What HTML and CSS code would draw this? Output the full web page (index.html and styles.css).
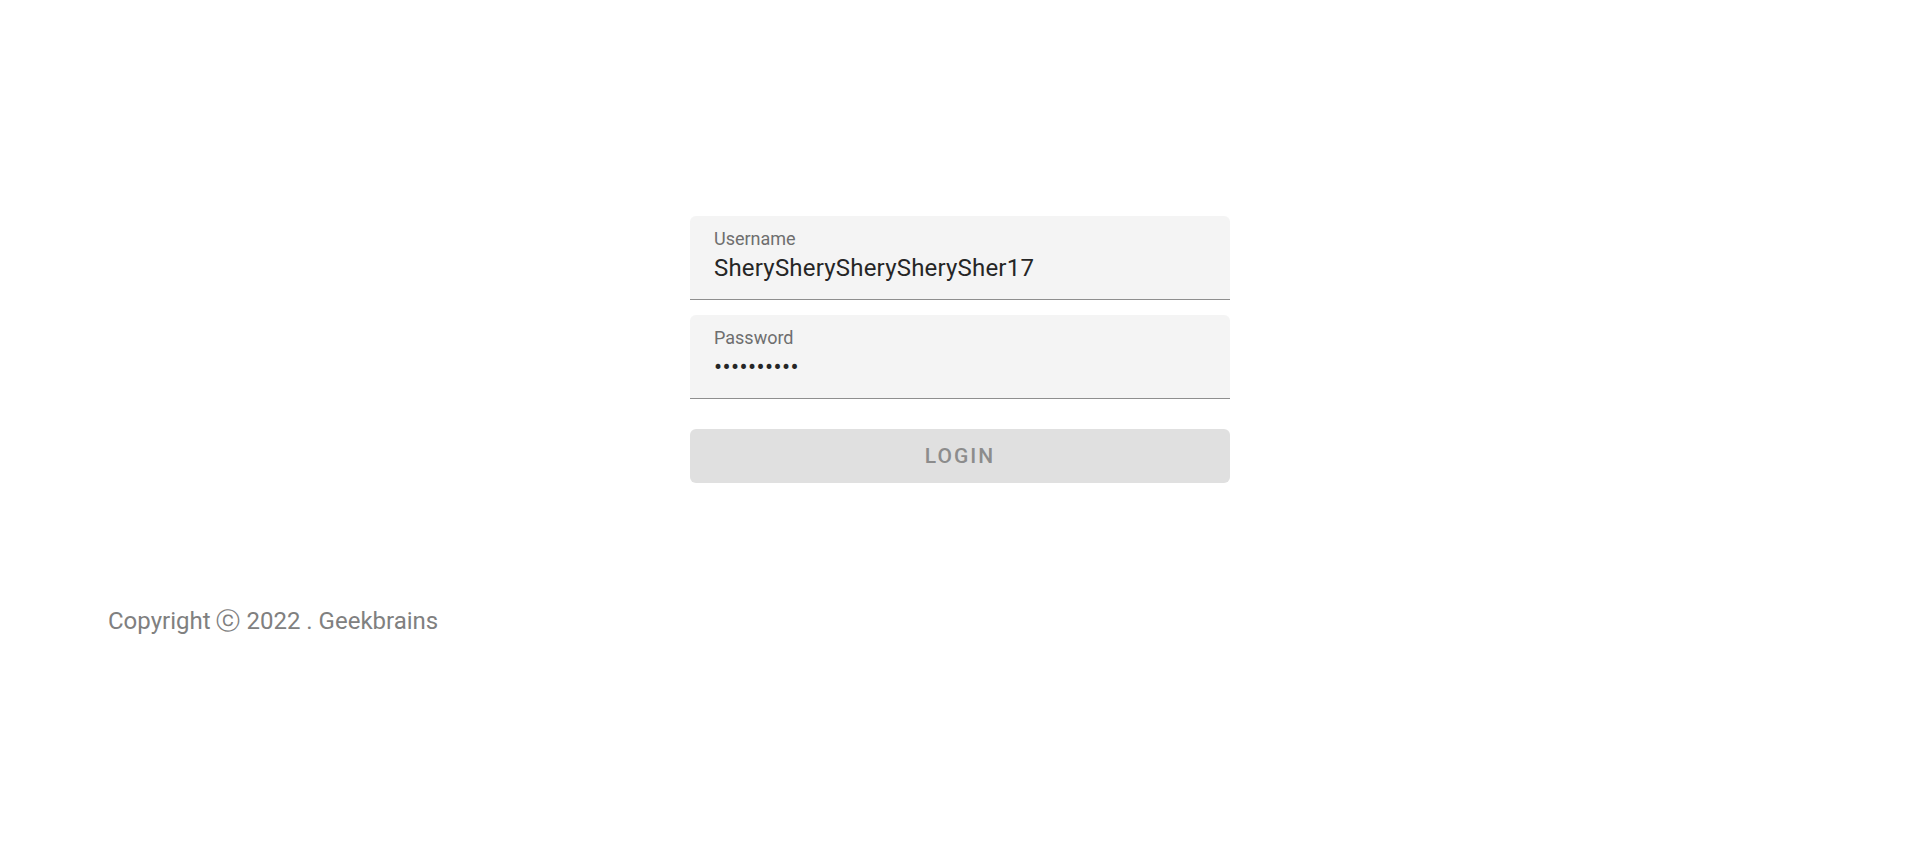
FILE: index.html
```html
<!DOCTYPE html>
<html lang="en">
<head>
<meta charset="utf-8">
<title>Login</title>
<link rel="stylesheet" href="styles.css">
</head>
<body>
<main class="page">
  <form class="login">
    <label class="field">
      <span class="field-label">Username</span>
      <input class="field-input" type="text" value="SherySherySherySherySher17">
    </label>
    <label class="field">
      <span class="field-label">Password</span>
      <input class="field-input field-input--password" type="password" value="1234567890">
    </label>
    <button class="login-btn" type="button" disabled>Login</button>
  </form>
  <footer class="footer">Copyright ⓒ 2022 . Geekbrains</footer>
</main>
</body>
</html>
```

FILE: styles.css
```css
html, body {
  margin: 0;
  padding: 0;
  background: #ffffff;
}

body {
  font-family: Roboto, "Liberation Sans", sans-serif;
  color: rgba(0, 0, 0, 0.87);
}

.page {
  padding-top: 216px;
}

.login {
  width: 540px;
  margin: 0 auto;
  display: flex;
  flex-direction: column;
}

.field {
  display: flex;
  flex-direction: column;
  box-sizing: border-box;
  height: 84px;
  padding: 14px 24px 0;
  background: #f4f4f4;
  border-radius: 6px 6px 0 0;
  border-bottom: 1px solid #8e8e8e;
  margin-bottom: 15px;
}

.field-label {
  font-size: 18px;
  line-height: 18px;
  color: #6e6e6e;
}

.field-input {
  margin-top: 5px;
  padding: 0;
  border: none;
  outline: none;
  background: transparent;
  font-family: inherit;
  font-size: 24px;
  line-height: 30px;
  height: 30px;
  letter-spacing: 0.2px;
  color: #262626;
}

.field-input--password {
  letter-spacing: 0.4px;
}

.login-btn {
  margin-top: 15px;
  height: 54px;
  border: none;
  border-radius: 6px;
  background: #e0e0e0;
  color: #8c8c8c;
  font-family: inherit;
  font-size: 21px;
  font-weight: 500;
  letter-spacing: 2px;
  text-transform: uppercase;
  padding: 0;
}

.footer {
  margin-top: 123px;
  padding-left: 108px;
  font-size: 24px;
  line-height: 30px;
  color: #808080;
}
```
